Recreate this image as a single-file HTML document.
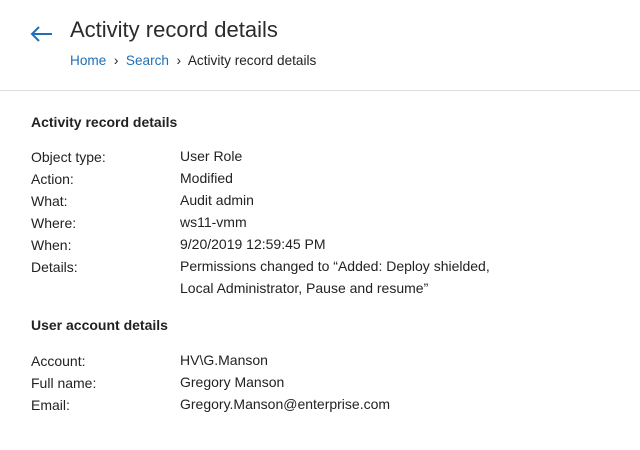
<!DOCTYPE html>
<html><head><meta charset="utf-8"><style>
body{margin:0;width:640px;height:450px;background:#fff;font-family:"Liberation Sans",sans-serif;color:#222;position:relative;overflow:hidden}
.a{position:absolute;white-space:nowrap}
h1{position:absolute;left:70px;top:17px;margin:0;font-weight:normal;font-size:22px;color:#2b2b2b}
.bc{left:70px;top:53px;font-size:13.6px}
.bc span.l{color:#1e6fb8}
hr{position:absolute;left:0;top:90px;width:640px;margin:0;border:0;border-top:1px solid #ddd}
.h{font-weight:bold;font-size:14px;left:31px}
.k{left:31px;font-size:14px}
.v{left:180px;font-size:14px}
</style></head><body>
<svg class="a" style="left:30px;top:26px" width="24" height="16" viewBox="0 0 24 16"><path d="M22 8H2M9 1L2 8l7 7" fill="none" stroke="#1e6fb8" stroke-width="2"/></svg>
<h1>Activity record details</h1>
<div class="a bc"><span class="l">Home</span> &nbsp;›&nbsp; <span class="l">Search</span> &nbsp;›&nbsp; Activity record details</div>
<hr>
<div class="a h" style="top:114px">Activity record details</div>
<div class="a k" style="top:149px">Object type:</div><div class="a v" style="top:148px">User Role</div>
<div class="a k" style="top:171px">Action:</div><div class="a v" style="top:170px">Modified</div>
<div class="a k" style="top:193px">What:</div><div class="a v" style="top:192px">Audit admin</div>
<div class="a k" style="top:215px">Where:</div><div class="a v" style="top:214px">ws11-vmm</div>
<div class="a k" style="top:237px">When:</div><div class="a v" style="top:236px">9/20/2019 12:59:45 PM</div>
<div class="a k" style="top:259px">Details:</div><div class="a v" style="top:255px;line-height:22px">Permissions changed to “Added: Deploy shielded,<br>Local Administrator, Pause and resume”</div>
<div class="a h" style="top:317px">User account details</div>
<div class="a k" style="top:353px">Account:</div><div class="a v" style="top:352px">HV\G.Manson</div>
<div class="a k" style="top:375px">Full name:</div><div class="a v" style="top:374px">Gregory Manson</div>
<div class="a k" style="top:397px">Email:</div><div class="a v" style="top:396px">Gregory.Manson@enterprise.com</div>
</body></html>
